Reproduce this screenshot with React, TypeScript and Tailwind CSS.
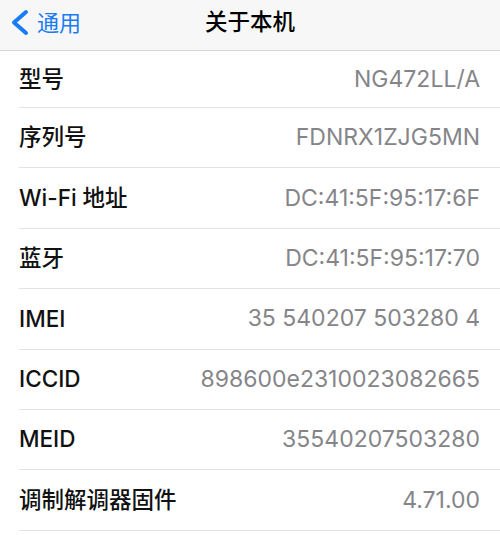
import React from 'react'

const rows: [string, string][] = [
  ['型号', 'NG472LL/A'],
  ['序列号', 'FDNRX1ZJG5MN'],
  ['Wi-Fi 地址', 'DC:41:5F:95:17:6F'],
  ['蓝牙', 'DC:41:5F:95:17:70'],
  ['IMEI', '35 540207 503280 4'],
  ['ICCID', '898600e2310023082665'],
  ['MEID', '35540207503280'],
  ['调制解调器固件', '4.71.00'],
]

export default function App() {
  return (
    <div
      className="w-[500px] h-[539px] bg-white overflow-hidden"
      style={{ fontFamily: '"Inter", "Noto Sans CJK SC", sans-serif' }}
    >
      {/* 导航栏 */}
      <div className="relative h-[51px] bg-[#f7f7f7] border-b border-[#d4d4d4] flex items-start">
        <div className="flex items-center pl-[9px] pt-[9px] gap-[7px] text-[#1a7cf5]">
          <svg width="21" height="27" viewBox="0 0 21 27">
            <path d="M17 3 L5 13.5 L17 24" fill="none" stroke="#1a7cf5" strokeWidth="4" strokeLinecap="round" strokeLinejoin="round" />
          </svg>
          <span className="text-[22px] leading-none">通用</span>
        </div>
        <div className="absolute inset-x-0 top-0 h-[45px] flex items-center justify-center pointer-events-none">
          <span className="text-[22.5px] leading-none font-medium text-black">关于本机</span>
        </div>
      </div>

      {/* 列表 */}
      <div className="flex flex-col">
        {rows.map(([label, value], i) => (
          <div
            key={label}
            className={`ml-[19px] border-b border-[#e2e2e2] flex items-center justify-between pr-[20px] ${
              i === 0 ? 'h-[57px]' : 'h-[60.4px]'
            }`}
          >
            <span className="text-[22.5px] font-medium text-[#111] leading-none">{label}</span>
            <span className="text-[23px] text-[#858589] leading-none">{value}</span>
          </div>
        ))}
      </div>
    </div>
  )
}
